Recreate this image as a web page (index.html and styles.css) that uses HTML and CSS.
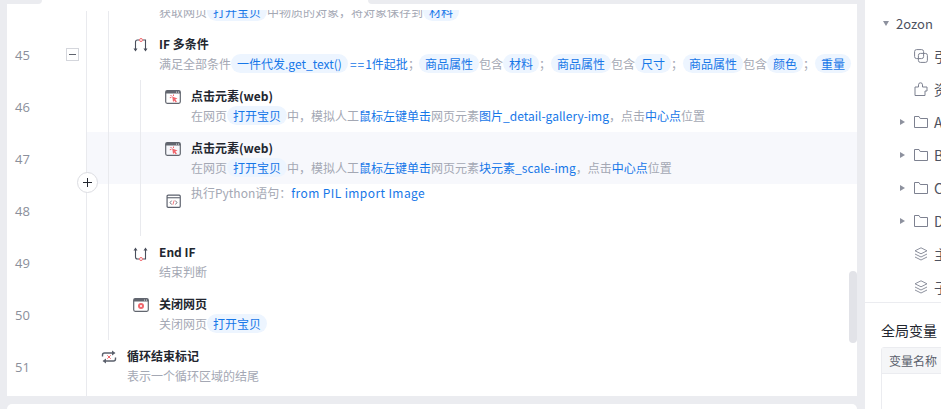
FILE: index.html
```html
<!DOCTYPE html>
<html lang="zh">
<head>
	<meta charset="utf-8">
	<title>流程编辑</title>
	<link rel="stylesheet" href="styles.css">
</head>
<body>
	<div class="workspace">
		<div class="flow-column">
			<div class="flow-panel">
				<div class="flow-list">

					<div class="row row-cut">
						<div class="gutter"></div>
						<div class="body indent-2">
							<div class="desc desc-cut">获取网页<span class="tag">打开宝贝</span>中物质的对象，将对象保存到<span class="tag">材料</span></div>
						</div>
					</div>

					<div class="row row-if">
						<div class="gutter"><span class="num">45</span><span class="fold"></span></div>
						<div class="body indent-2">
							<svg class="icon" viewBox="0 0 16 16"><path d="M2.500 13V5q0-2 2-2H6M12.500 13V3H10" fill="none" stroke="#4a4f5c" stroke-width="1.100"/><path d="M.5 11.500h4L2.500 14.500zM10.500 11.500h4l-2 3z" fill="#4a4f5c"/><circle cx="8" cy="3" r="1.500" fill="none" stroke="#f0666c"/></svg>
							<div class="text">
								<div class="title">IF 多条件</div>
								<div class="desc">满足全部条件<span class="tag">一件代发.get_text()</span><span class="val val-first"><span class="op">==</span>1件起批</span>；<span class="tag tag-gap">商品属性</span>包含<span class="tag">材料</span>；<span class="tag">商品属性</span>包含<span class="tag">尺寸</span>；<span class="tag">商品属性</span>包含<span class="tag">颜色</span>；<span class="tag">重量</span></div>
							</div>
						</div>
					</div>

					<div class="row">
						<div class="gutter"><span class="num">46</span></div>
						<div class="body indent-3">
							<svg class="icon" viewBox="0 0 16 16"><use href="#win"/><path d="M5.500 6l1.500 1.500M8.500 5.500V7M4.800 8.700L6.300 8.500" stroke="#f0666c" fill="none"/><path d="M7.200 7.500l5.300 2-2.200 1 1.600 2-1.100.9-1.600-2-1.100 1.800z" fill="#f0666c"/></svg>
							<div class="text">
								<div class="title">点击元素(web)</div>
								<div class="desc">在网页<span class="tag">打开宝贝</span>中，模拟人工<span class="val">鼠标左键单击</span>网页元素<span class="val">图片_detail-gallery-img</span>，点击<span class="val">中心点</span>位置</div>
							</div>
						</div>
					</div>

					<div class="row row-hover">
						<div class="gutter"><span class="num">47</span></div>
						<div class="body indent-3">
							<svg class="icon" viewBox="0 0 16 16"><use href="#win"/><path d="M5.500 6l1.500 1.500M8.500 5.500V7M4.800 8.700L6.300 8.500" stroke="#f0666c" fill="none"/><path d="M7.200 7.500l5.300 2-2.200 1 1.600 2-1.100.9-1.600-2-1.100 1.800z" fill="#f0666c"/></svg>
							<div class="text">
								<div class="title">点击元素(web)</div>
								<div class="desc">在网页<span class="tag">打开宝贝</span>中，模拟人工<span class="val">鼠标左键单击</span>网页元素<span class="val">块元素_scale-img</span>，点击<span class="val">中心点</span>位置</div>
							</div>
						</div>
						<button class="add-btn"></button>
					</div>

					<div class="row row-python">
						<div class="gutter"><span class="num">48</span></div>
						<div class="body indent-3">
							<svg class="icon icon-py" viewBox="0 0 14 14"><rect x="1" y="1" width="12.300" height="11.500" rx="1" fill="none" stroke="#5b606c" stroke-width="1.100"/><path d="M1 3.500h12" stroke="#5b606c"/><path d="M5.200 6.200L3.800 8l1.400 1.800M8.800 6.200L10.200 8 8.800 9.800" fill="none" stroke="#5b606c" stroke-width=".8"/><path d="M7.600 6L6.400 10" stroke="#f0666c" stroke-width=".8"/></svg>
							<div class="desc desc-py">执行Python语句：<span class="val val-py">from PIL import Image</span></div>
						</div>
					</div>

					<div class="row row-end">
						<div class="gutter"><span class="num">49</span></div>
						<div class="body indent-2">
							<svg class="icon" viewBox="0 0 16 16"><path d="M2.500 4v8q0 2 2 2H6M12.500 4v10H10" fill="none" stroke="#4a4f5c" stroke-width="1.100"/><path d="M.5 5.500h4L2.500 2.500zM10.500 5.500h4l-2-3z" fill="#4a4f5c"/><circle cx="8" cy="14" r="1.500" fill="none" stroke="#f0666c"/></svg>
							<div class="text">
								<div class="title">End IF</div>
								<div class="desc">结束判断</div>
							</div>
						</div>
					</div>

					<div class="row">
						<div class="gutter"><span class="num">50</span></div>
						<div class="body indent-2">
							<svg class="icon" viewBox="0 0 16 16"><use href="#win"/><circle cx="8" cy="9" r="3" fill="#f0666c"/><circle cx="8" cy="9" r="1.100" fill="#fff"/></svg>
							<div class="text">
								<div class="title">关闭网页</div>
								<div class="desc">关闭网页<span class="tag">打开宝贝</span></div>
							</div>
						</div>
					</div>

					<div class="row">
						<div class="gutter"><span class="num">51</span></div>
						<div class="body indent-1">
							<svg class="icon" viewBox="0 0 16 16"><path d="M1.500 7.500V6q0-2 2-2h8.500M14.500 8.500V10q0 2-2 2H4" fill="none" stroke="#5b606c" stroke-width="1.400"/><path d="M11 1.500L14.500 4 11 6.500zM5 9.500L1.500 12 5 14.500z" fill="#5b606c"/><path d="M6.300 6.300l3.400 3.400M9.700 6.300L6.300 9.700" stroke="#f0666c"/></svg>
							<div class="text">
								<div class="title">循环结束标记</div>
								<div class="desc">表示一个循环区域的结尾</div>
							</div>
						</div>
					</div>

				</div>
				<div class="strip strip-left"></div>
				<div class="strip strip-right"></div>
				<div class="line-gutter"></div>
				<div class="line-outer"></div>
				<div class="line-inner"></div>
				<div class="scroll-thumb"></div>
			</div>
			<div class="bottom-panel"></div>
		</div>

		<aside class="side">
			<div class="tree">
				<div class="tree-item lvl-root"><span class="caret caret-down"></span>2ozon</div>
				<div class="tree-item lvl-2">
					<svg class="ti" viewBox="0 0 14 14"><rect x=".6" y=".6" width="9" height="9" rx="2" fill="none" stroke="#7d8190"/><rect x="4.400" y="4.400" width="9" height="9" rx="2" fill="none" stroke="#7d8190"/></svg>引
				</div>
				<div class="tree-item lvl-2">
					<svg class="ti" viewBox="0 0 14 14"><path d="M1 5h3.500V2.800a2 2 0 0 1 4 0V5H13v4h-2v4.500H1z" fill="none" stroke="#7d8190"/></svg>资
				</div>
				<div class="tree-item lvl-1"><span class="caret caret-right"></span><svg class="ti" viewBox="0 0 14 12"><path d="M.5 11.500V.5h4.500l1.200 2h7.300v9z" fill="none" stroke="#7d8190"/></svg>A</div>
				<div class="tree-item lvl-1"><span class="caret caret-right"></span><svg class="ti" viewBox="0 0 14 12"><path d="M.5 11.500V.5h4.500l1.200 2h7.300v9z" fill="none" stroke="#7d8190"/></svg>B</div>
				<div class="tree-item lvl-1"><span class="caret caret-right"></span><svg class="ti" viewBox="0 0 14 12"><path d="M.5 11.500V.5h4.500l1.200 2h7.300v9z" fill="none" stroke="#7d8190"/></svg>C</div>
				<div class="tree-item lvl-1"><span class="caret caret-right"></span><svg class="ti" viewBox="0 0 14 12"><path d="M.5 11.500V.5h4.500l1.200 2h7.300v9z" fill="none" stroke="#7d8190"/></svg>D</div>
				<div class="tree-item lvl-2">
					<svg class="ti" viewBox="0 0 14 14"><path d="M7 .8l6 3-6 3-6-3zM1 7l6 3 6-3M1 10l6 3 6-3" fill="none" stroke="#8d919e"/></svg>主
				</div>
				<div class="tree-item lvl-2">
					<svg class="ti" viewBox="0 0 14 14"><path d="M7 .8l6 3-6 3-6-3zM1 7l6 3 6-3M1 10l6 3 6-3" fill="none" stroke="#8d919e"/></svg>子
				</div>
			</div>
			<div class="vars">
				<div class="vars-title">全局变量</div>
				<div class="vars-table">
					<div class="vars-head">变量名称</div>
				</div>
			</div>
		</aside>
	</div>

	<svg class="defs" width="0" height="0">
		<symbol id="win" viewBox="0 0 16 16">
			<rect x=".7" y="1.700" width="14.600" height="12.600" rx="1.500" fill="none" stroke="#62666f" stroke-width="1.200"/>
			<path d="M.7 3q0-1.300 1.300-1.300h12q1.300 0 1.300 1.300v1.500H.7z" fill="#62666f"/>
			<path d="M11 3.100h.9M13 3.100h.9" stroke="#fff" stroke-width=".9"/>
		</symbol>
	</svg>
</body>
</html>
```

FILE: styles.css
```css
html, body {
	margin: 0;
	height: 100%;
	overflow: hidden;
}

body {
	background: #ebecf0;
	font-family: "Noto Sans CJK SC", "Noto Sans", sans-serif;
	font-size: 12px;
	color: #a4a8b4;
}

.defs {
	position: absolute;
}

.workspace {
	display: flex;
	height: 409px;
}

.flow-column {
	width: 850px;
	margin-left: 7px;
	flex: none;
}

.flow-panel {
	position: relative;
	height: 396px;
	background: #fff;
	overflow: hidden;
}

.bottom-panel {
	height: 5px;
	margin-top: 8px;
	background: #fff;
	border-radius: 5px 5px 0 0;
}

.row {
	position: relative;
	display: flex;
	height: 52px;
}

.row-cut {
	height: 16px;
	margin-top: 10px;
	overflow: hidden;
}

.row-if {
	height: 54px;
}

.row-hover {
	background: linear-gradient(to right, #fff 80px, #f7f8fc 80px);
}

.gutter {
	width: 80px;
	flex: none;
	display: flex;
	align-items: center;
	position: relative;
	padding-top: 1px;
	box-sizing: border-box;
}

.row-if .gutter {
	padding-top: 4px;
}

.num {
	margin-left: 8px;
	font-family: "Open Sans", sans-serif;
	font-size: 13px;
	color: #8b8f9b;
}

.fold {
	position: absolute;
	left: 59px;
	top: 22px;
	width: 11px;
	height: 11px;
	border: 1px solid #d4d6dc;
	background: linear-gradient(#60646e, #60646e) center / 7px 1px no-repeat;
}

.body {
	display: flex;
	align-items: flex-start;
	flex: 1;
	min-width: 0;
	white-space: nowrap;
}

.indent-1 {
	padding-left: 14px;
}

.indent-2 {
	padding-left: 46px;
}

.indent-3 {
	padding-left: 78px;
}

.icon {
	width: 16px;
	height: 16px;
	margin-top: 9px;
	margin-right: 10px;
	flex: none;
}

.row-if .icon {
	margin-top: 11px;
}

.icon-py {
	width: 15px;
	height: 15px;
	margin-top: 10px;
	margin-left: 1px;
}

.text {
	padding-top: 6px;
}

.row-if .text {
	padding-top: 8px;
}

.title {
	height: 20px;
	line-height: 20px;
	font-weight: 700;
	color: #22262f;
	font-size: 12px;
}

.desc {
	height: 20px;
	line-height: 20px;
}

.desc-cut {
	margin-left: 26px;
	margin-top: -8px;
}

.desc-py {
	margin-top: -1px;
}

.tag {
	display: inline-block;
	height: 19px;
	line-height: 19px;
	padding: 0 6px;
	border-radius: 10px;
	background: #edf5ff;
	color: #1677e8;
}

.tag-gap {
	margin-left: -1px;
}

.val {
	color: #1677e8;
}

.val-first {
	margin-left: 2px;
}

.val-py {
	letter-spacing: 0.4px;
}

.op {
	letter-spacing: 1px;
}

.strip {
	position: absolute;
	top: 0;
	height: 4px;
	background: #ebecf0;
}

.strip-left {
	left: 0;
	width: 35px;
	border-radius: 0 0 4px 0;
}

.strip-right {
	left: 361px;
	right: 0;
	border-radius: 0 0 0 4px;
}

.line-gutter,
.line-outer,
.line-inner {
	position: absolute;
	width: 1px;
	background: #e9eaee;
}

.line-gutter {
	left: 79px;
	top: 11px;
	bottom: 0;
}

.line-outer {
	left: 101px;
	top: 11px;
	height: 329px;
}

.line-inner {
	left: 133px;
	top: 80px;
	height: 156px;
}

.add-btn {
	position: absolute;
	left: 70px;
	top: 40px;
	width: 21px;
	height: 21px;
	padding: 0;
	border: 1px solid #dcdde2;
	border-radius: 50%;
	z-index: 1;
	background:
		linear-gradient(#22262f, #22262f) center / 9px 1px no-repeat,
		linear-gradient(#22262f, #22262f) center / 1px 9px no-repeat,
		#fff;
}

.scroll-thumb {
	position: absolute;
	right: 0;
	top: 271px;
	width: 8px;
	height: 72px;
	border-radius: 4px;
	background: #e2e3e8;
}

.side {
	position: relative;
	margin-left: 8px;
	width: 76px;
	flex: none;
	background: #fff;
	overflow: hidden;
	white-space: nowrap;
	color: #4d5260;
	font-size: 14px;
}

.tree {
	height: 303px;
	padding-top: 7px;
	box-sizing: border-box;
	border-bottom: 1px solid #ebecf0;
}

.tree-item {
	display: flex;
	align-items: center;
	height: 33px;
}

.lvl-root {
	padding-left: 18px;
	height: 32px;
	font-size: 13px;
}

.lvl-1 {
	padding-left: 35px;
}

.lvl-2 {
	padding-left: 49px;
}

.caret {
	width: 0;
	height: 0;
	border-style: solid;
	border-color: transparent;
	flex: none;
}

.caret-down {
	border-width: 5px 3px 0;
	border-top-color: #8d919e;
	margin-right: 7px;
}

.caret-right {
	border-width: 3.500px 0 3.500px 5px;
	border-left-color: #8d919e;
	margin-right: 9px;
}

.ti {
	width: 14px;
	height: 14px;
	margin-right: 6px;
	flex: none;
}

.vars {
	padding: 17px 0 0 16px;
}

.vars-title {
	height: 20px;
	line-height: 20px;
	font-size: 14px;
	color: #22262f;
}

.vars-table {
	margin-top: 7px;
	width: 100px;
	height: 80px;
	border: 1px solid #ebecf0;
	border-radius: 3px 0 0 0;
}

.vars-head {
	height: 25px;
	line-height: 25px;
	padding-left: 7px;
	background: #f5f6f8;
	border-bottom: 1px solid #ebecf0;
	font-size: 12px;
	color: #5a5f6c;
}
```
